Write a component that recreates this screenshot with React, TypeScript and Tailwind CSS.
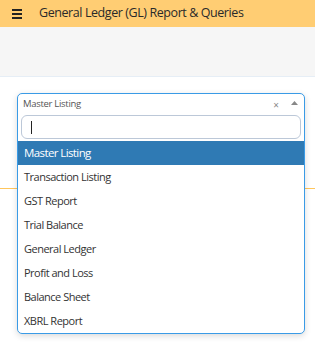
const options = [
  'Master Listing',
  'Transaction Listing',
  'GST Report',
  'Trial Balance',
  'General Ledger',
  'Profit and Loss',
  'Balance Sheet',
  'XBRL Report',
];

export default function App() {
  const selected = 'Master Listing';

  return (
    <div className="relative w-[315px] h-[348px] bg-white overflow-hidden font-['Open_Sans',sans-serif]">
      <div className="flex items-center h-[27px] bg-[#ffcd73]">
        <div className="flex flex-col gap-[2px] ml-[12px] w-[10px]">
          <span className="block h-[2px] bg-[#222]" />
          <span className="block h-[2px] bg-[#222]" />
          <span className="block h-[2px] bg-[#222]" />
        </div>
        <span className="ml-[17px] text-[12.5px] tracking-[-0.42px] text-[#2a2a2a]">
          General Ledger (GL) Report &amp; Queries
        </span>
      </div>
      <div className="h-[50px] bg-[#f6f6f6] border-b border-[#e6eef6]" />
      <div className="h-[111px]" />
      <div className="h-px bg-[#ffc65c]" />

      <div className="absolute left-[17px] top-[93px] w-[288px] h-[241px] rounded-[5px] border border-[#3a9be6] bg-white shadow-[0_2px_6px_rgba(0,0,0,0.15)] overflow-hidden">
        <div className="flex items-center h-[21px] pl-[5px] pr-[6px]">
          <span className="flex-1 text-[9.5px] tracking-[-0.3px] text-[#555]">{selected}</span>
          <span className="text-[10px] text-[#888] mr-[12px] leading-none">×</span>
          <svg width="7" height="4" viewBox="0 0 7 4" className="mb-[4px]">
            <path d="M0 4 L3.5 0 L7 4 Z" fill="#888" />
          </svg>
        </div>
        <div className="px-[3px] pb-[2px]">
          <div className="flex items-center h-[24px] rounded-[6px] border border-[#bcc8d8] pl-[9px]">
            <span className="block w-px h-[13px] bg-[#222]" />
          </div>
        </div>
        <ul>
          {options.map((o) => (
            <li
              key={o}
              className={
                o === selected
                  ? 'h-[24px] flex items-center pl-[6px] text-[11.5px] tracking-[-0.6px] text-white bg-[#2f7ab4]'
                  : 'h-[24px] flex items-center pl-[6px] text-[11px] tracking-[-0.5px] text-[#333]'
              }
            >
              {o}
            </li>
          ))}
        </ul>
      </div>
    </div>
  );
}
